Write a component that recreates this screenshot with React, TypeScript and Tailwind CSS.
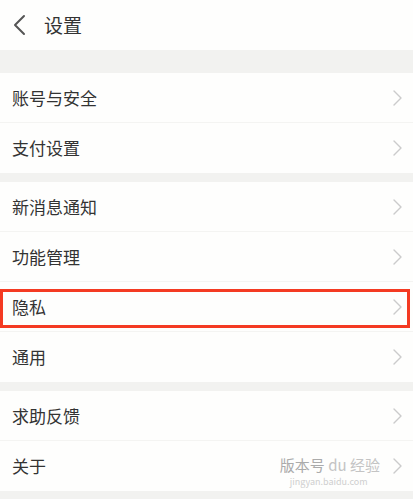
import React from 'react';

type Row = { label: string; extra?: boolean; highlight?: boolean };

const groups: Row[][] = [
  [{ label: '账号与安全' }, { label: '支付设置' }],
  [
    { label: '新消息通知' },
    { label: '功能管理' },
    { label: '隐私', highlight: true },
    { label: '通用' },
  ],
  [{ label: '求助反馈' }, { label: '关于', extra: true }],
];

function Chevron() {
  return (
    <svg width="9" height="16" viewBox="0 0 9 16" fill="none" className="shrink-0">
      <path d="M1 1l7 7-7 7" stroke="#cbcbcb" strokeWidth="1.4" strokeLinecap="round" strokeLinejoin="round" />
    </svg>
  );
}

function SettingRow({ row, last }: { row: Row; last: boolean }) {
  return (
    <div className="relative h-[50px] bg-[#fefefd]">
      <div
        className={`h-full flex items-center justify-between pl-3 pr-[11px] ${
          last ? '' : 'border-b border-[#f4f4f2]'
        }`}
      >
        <span className="text-[17px] text-[#333333]">{row.label}</span>
        <div className="flex items-center gap-[13px]">
          {row.extra && (
            <div className="relative -mt-[4px]">
              <span className="block text-[15px] leading-none text-[#ababab] whitespace-nowrap">
                版本号 <span className="text-[#c4c4c4]">du 经验</span>
              </span>
              {/* baidu watermark */}
              <span className="absolute left-[10px] top-[20px] text-[9px] leading-none text-[#cfcfcf] whitespace-nowrap">
                jingyan.baidu.com
              </span>
            </div>
          )}
          <Chevron />
        </div>
      </div>
      {row.highlight && (
        <div className="absolute left-0 right-[3px] top-[7px] bottom-[4px] border-[3px] border-[#f43a22]" />
      )}
    </div>
  );
}

export default function App() {
  return (
    <div
      className="w-[413px] h-[499px] overflow-hidden bg-[#f2f2f0]"
      style={{ fontFamily: '"Noto Sans CJK SC", "Noto Sans", sans-serif' }}
    >
      {/* Header */}
      <div className="h-[50px] bg-[#fefefd] flex items-center pl-[13px]">
        <svg width="13" height="22" viewBox="0 0 13 22" fill="none">
          <path d="M11 2L2 11l9 9" stroke="#555555" strokeWidth="2" strokeLinecap="round" strokeLinejoin="round" />
        </svg>
        <span className="ml-[18px] text-[19px] text-[#333333]">设置</span>
      </div>

      <div className="h-[23px]" />
      {groups.map((g, gi) => (
        <div key={gi} className={gi > 0 ? 'mt-[9px]' : ''}>
          {g.map((row, ri) => (
            <SettingRow key={row.label} row={row} last={ri === g.length - 1} />
          ))}
        </div>
      ))}
    </div>
  );
}
